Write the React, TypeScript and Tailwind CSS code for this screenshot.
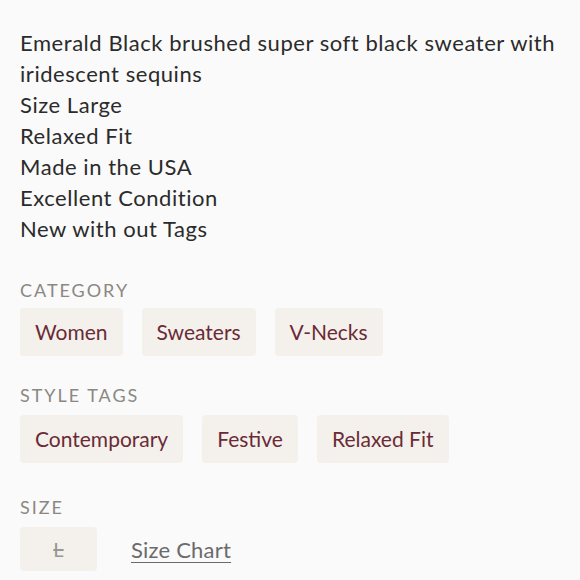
const chip =
  "rounded-[4px] bg-[#f4f1ed] px-[15px] h-[48px] flex items-center text-[21px] text-[#6a2b35]";
const label =
  "text-[18px] uppercase tracking-[0.11em] text-[#8b8782] leading-none";

function ChipRow({ items }: { items: string[] }) {
  return (
    <div className="flex flex-wrap gap-[19px]">
      {items.map((t) => (
        <span key={t} className={chip}>
          {t}
        </span>
      ))}
    </div>
  );
}

export default function App() {
  return (
    <div
      className="min-h-[580px] w-[580px] bg-[#fafafa] px-5 pt-[27px] text-[#2b2b2b]"
      style={{ fontFamily: "Lato, 'Open Sans', sans-serif" }}
    >
      <div className="text-[22px] leading-[31px] tracking-[0.025em] whitespace-nowrap">
        <p>
          Emerald Black brushed super soft black sweater with
          <br />
          iridescent sequins
        </p>
        <p>Size Large</p>
        <p>Relaxed Fit</p>
        <p>Made in the USA</p>
        <p>Excellent Condition</p>
        <p>New with out Tags</p>
      </div>

      <div className="mt-[37px]">
        <h3 className={label}>Category</h3>
        <div className="mt-[9px]">
          <ChipRow items={["Women", "Sweaters", "V-Necks"]} />
        </div>
      </div>

      <div className="mt-[30px]">
        <h3 className={label}>Style Tags</h3>
        <div className="mt-[11px]">
          <ChipRow items={["Contemporary", "Festive", "Relaxed Fit"]} />
        </div>
      </div>

      <div className="mt-[35px]">
        <h3 className={label}>Size</h3>
        <div className="mt-[11px] flex items-center gap-[34px]">
          <span className="flex h-[44px] w-[77px] items-center justify-center rounded-[4px] bg-[#f4f1ed] text-[20px] text-[#9a9692] line-through">
            L
          </span>
          <a href="#" className="text-[22px] tracking-[0.01em] text-[#6b6b6b] underline underline-offset-4 decoration-1">
            Size Chart
          </a>
        </div>
      </div>
    </div>
  );
}
